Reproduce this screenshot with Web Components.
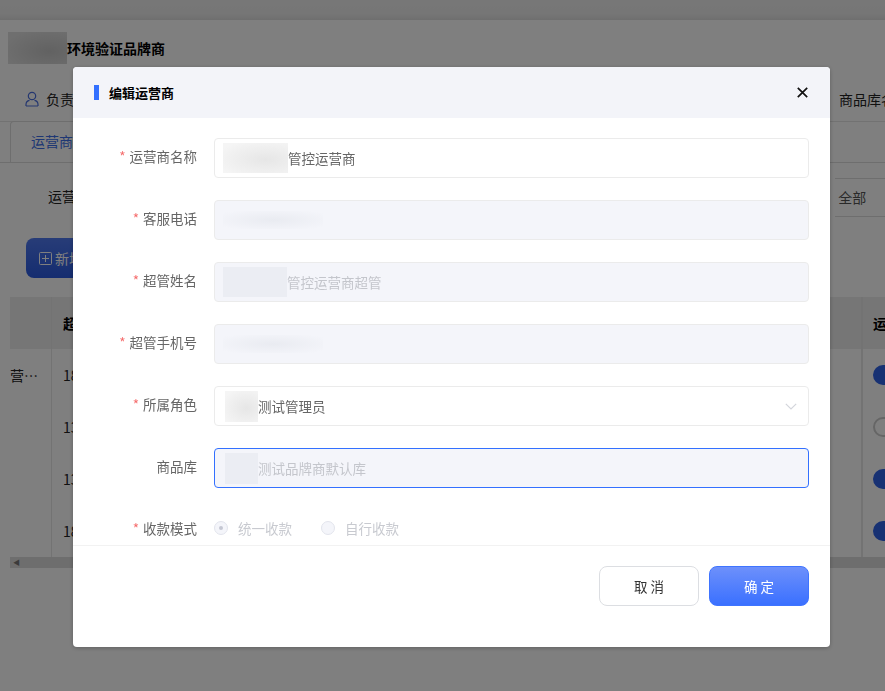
<!DOCTYPE html>
<html lang="zh">
<head>
<meta charset="utf-8">
<title>编辑运营商</title>
<style>
  html, body { margin: 0; height: 100%; background: #fff; overflow: hidden; }
  body { font-family: "Noto Sans CJK SC", "Liberation Sans", sans-serif; font-size: 14px; }
</style>
</head>
<body>
<back-page></back-page>
<modal-mask>
  <edit-dialog heading="编辑运营商">
    <form-row label="运营商名称" required><text-field value="管控运营商" blur="65"></text-field></form-row>
    <form-row label="客服电话" required><text-field disabled blur="100" ghost></text-field></form-row>
    <form-row label="超管姓名" required><text-field disabled value="管控运营商超管" blur="64"></text-field></form-row>
    <form-row label="超管手机号" required><text-field disabled blur="100" ghost></text-field></form-row>
    <form-row label="所属角色" required><text-field value="测试管理员" blur="33" lead="10" arrow></text-field></form-row>
    <form-row label="商品库"><text-field disabled focused value="测试品牌商默认库" blur="33" lead="10"></text-field></form-row>
    <form-row label="收款模式" required>
      <radio-group>
        <radio-item checked>统一收款</radio-item>
        <radio-item>自行收款</radio-item>
      </radio-group>
    </form-row>
    <dialog-button slot="footer">取 消</dialog-button>
    <dialog-button slot="footer" primary>确 定</dialog-button>
  </edit-dialog>
</modal-mask>

<script>
// page behind the mask
const pageTpl = document.createElement('template');
pageTpl.innerHTML = `
<style>
  :host { display: block; height: 691px; overflow: hidden; color: #222; }
  .top { height: 20px; background: linear-gradient(#efefef, #ececec 70%, #dedede); }
  .title { display: flex; align-items: center; height: 32px; margin: 12px 0 0 8px; font-weight: 700; font-size: 14px; color: #000; }
  .title i { width: 59px; height: 32px; background: radial-gradient(ellipse at 70% 60%, #c4c4c4, #dedede 80%); }
  .info { display: flex; justify-content: space-between; align-items: center; height: 40px; margin-top: 15px; padding-left: 25px; }
  .info span { display: flex; align-items: center; gap: 7px; }
  .info .right { width: 46px; white-space: nowrap; }
  .tabs { display: flex; height: 41px; border-bottom: 1px solid #dcdcdc; margin-top: 2px; box-shadow: inset 0 1px 0 #e4e4e4; }
  .tab { width: 100px; margin-left: 10px; box-sizing: border-box; border: 1px solid #dcdcdc; border-bottom: 0; border-radius: 4px 4px 0 0; padding: 9px 20px; color: #3d6fe8; white-space: nowrap; }
  .filter { display: flex; justify-content: space-between; height: 39px; padding-left: 48px; margin-top: 15px; line-height: 36px; }
  .filter .sel { width: 50px; border-top: 1px solid #dcdcdc; border-bottom: 1px solid #dcdcdc; color: #555; white-space: nowrap; margin-top: 0; }
  .filter { margin-top: 15px; }
  .add { width: 120px; height: 40px; margin: 21px 0 0 26px; box-sizing: border-box; border-radius: 8px; background: linear-gradient(#4f79f0, #2a5ae0); color: #fff; display: flex; align-items: center; gap: 3px; padding-left: 13px; }
  .table { display: grid; grid-template-columns: 42px 1fr 23px; margin: 19px 0 0 10px; }
  .cell { height: 52px; display: flex; align-items: center; box-sizing: border-box; border-right: 1px solid #e6e6e6; border-bottom: 0; }
  .head { background: #ececec; font-weight: 700; color: #000; }
  .c2 { padding-left: 11px; }
  .c3 { border-right: 0; border-left: 1px solid #e6e6e6; padding-left: 10px; }
  .on, .off { width: 40px; height: 20px; flex: none; border-radius: 10px; background: #2f62e6; }
  .off { box-sizing: border-box; background: #fff; border: 2px solid #ccc; }
  .sb { height: 11px; background: #dcdcdc; margin: 0 0 0 10px; color: #777; font-size: 7px; line-height: 11px; padding-left: 3px; }
  .num { color: #222; }
</style>
<div class="top"></div>
<div class="title"><i></i>环境验证品牌商</div>
<div class="info">
  <span><svg width="14" height="16" viewBox="0 0 14 16" fill="none" stroke="#4a6fe0" stroke-width="1.2"><circle cx="7" cy="5" r="3.7"/><path d="M1 15v-1.5C1 11 3 9.6 4.5 9.3M13 15v-1.5C13 11 11 9.6 9.5 9.3M1 15h12"/></svg>负责人</span>
  <span class="right">商品库名称</span>
</div>
<div class="tabs"><div class="tab">运营商列表</div></div>
<div class="filter"><span>运营商</span><span class="sel">&nbsp;全部</span></div>
<div class="add"><svg width="13" height="13" viewBox="0 0 13 13" fill="none" stroke="#fff"><rect x=".5" y=".5" width="12" height="12" rx="1"/><path d="M6.5 3v7M3 6.5h7"/></svg>新增</div>
<div class="table">
  <div class="cell head"></div><div class="cell head c2">超管手机号</div><div class="cell head c3">运</div>
  <div class="cell">营…</div><div class="cell c2 num">18</div><div class="cell c3"><span class="on"></span></div>
  <div class="cell"></div><div class="cell c2 num">13</div><div class="cell c3"><span class="off"></span></div>
  <div class="cell"></div><div class="cell c2 num">13</div><div class="cell c3"><span class="on"></span></div>
  <div class="cell"></div><div class="cell c2 num">18</div><div class="cell c3"><span class="on"></span></div>
</div>
<div class="sb">◀</div>`;
class BackPage extends HTMLElement {
  constructor() {
    super();
    this.attachShadow({ mode: 'open' }).appendChild(pageTpl.content.cloneNode(true));
  }
}
customElements.define('back-page', BackPage);

class ModalMask extends HTMLElement {
  constructor() {
    super();
    this.attachShadow({ mode: 'open' }).innerHTML = `
      <style>
        :host { position: fixed; inset: 0; display: flex; box-sizing: border-box; padding: 67px 55px 0 73px; background: rgba(0, 0, 0, 0.5); }
      </style>
      <slot></slot>`;
  }
}
customElements.define('modal-mask', ModalMask);

const dialogTpl = document.createElement('template');
dialogTpl.innerHTML = `
<style>
  :host { display: block; width: 757px; height: 580px; background: #fff; border-radius: 4px; overflow: hidden; box-shadow: 0 1px 4px rgba(0, 0, 0, 0.25); }
  header { display: flex; align-items: center; height: 51px; background: #f3f4f9; padding: 0 22px 0 21px; font-weight: 700; font-size: 13px; color: #000; }
  header i { width: 5px; height: 15px; background: #3370ff; margin-right: 10px; }
  header span { flex: 1; }
  .body { display: flex; flex-direction: column; gap: 22px; height: 428px; box-sizing: border-box; padding: 20px 21px 0 0; border-bottom: 1px solid #f2f2f2; }
  footer { display: flex; justify-content: flex-end; gap: 10px; padding: 20px 21px 0 0; }
</style>
<header><i></i><span class="h"></span>
  <svg width="11" height="11" viewBox="0 0 11 11" fill="none" stroke="#111" stroke-width="1.7"><path d="M.8.8l9.4 9.4M10.2.8L.8 10.2"/></svg>
</header>
<div class="body"><slot></slot></div>
<footer><slot name="footer"></slot></footer>`;
class EditDialog extends HTMLElement {
  constructor() {
    super();
    this.attachShadow({ mode: 'open' }).appendChild(dialogTpl.content.cloneNode(true));
  }
  connectedCallback() {
    this.shadowRoot.querySelector('.h').textContent = this.getAttribute('heading');
  }
}
customElements.define('edit-dialog', EditDialog);

class FormRow extends HTMLElement {
  constructor() {
    super();
    this.attachShadow({ mode: 'open' }).innerHTML = `
      <style>
        :host { display: flex; height: 40px; }
        label { flex: none; width: 124px; margin-right: 17px; text-align: right; font-size: 13.5px; line-height: 37px; color: #666; white-space: nowrap; }
        b { color: #f56c6c; font-weight: 400; margin-right: 4px; }
        div { flex: 1; min-width: 0; }
      </style>
      <label></label><div><slot></slot></div>`;
  }
  connectedCallback() {
    const star = this.hasAttribute('required') ? '<b>*</b>' : '';
    this.shadowRoot.querySelector('label').innerHTML = star + this.getAttribute('label');
  }
}
customElements.define('form-row', FormRow);

class TextField extends HTMLElement {
  constructor() {
    super();
    this.attachShadow({ mode: 'open' }).innerHTML = `
      <style>
        :host { display: flex; align-items: center; height: 40px; box-sizing: border-box; padding-left: var(--lead, 8px); border: 1px solid #ebebeb; border-radius: 4px; background: #fff; color: #666; font-size: 13.5px; overflow: hidden; }
        :host([disabled]) { background: #f4f5fa; color: #c4c6cc; }
        :host([focused]) { border-color: #3370ff; }
        .mask { flex: none; height: 30px; background: radial-gradient(ellipse at 65% 55%, #e6e6e6, #f5f5f5 85%); }
        :host([lead]) .mask { height: 31px; }
        :host([disabled]) .mask { background: #ebedf3; }
        :host([ghost]) .mask { height: 18px; background: radial-gradient(ellipse at center, #e9ebf1, #f4f5fa 90%); }
        span { flex: 1; white-space: nowrap; }
        svg { margin-right: 11px; flex: none; }
      </style>
      <div class="mask"></div><span></span>`;
  }
  connectedCallback() {
    this.shadowRoot.querySelector('.mask').style.width = this.getAttribute('blur') + 'px';
    this.shadowRoot.querySelector('span').textContent = this.getAttribute('value') || '';
    if (this.hasAttribute('lead')) this.style.setProperty('--lead', this.getAttribute('lead') + 'px');
    if (this.hasAttribute('arrow')) {
      this.shadowRoot.querySelector('span').insertAdjacentHTML('afterend',
        '<svg width="12" height="7" viewBox="0 0 12 7" fill="none" stroke="#d4d6dc" stroke-width="1.2"><path d="M.8.8L6 6l5.2-5.2"/></svg>');
    }
  }
}
customElements.define('text-field', TextField);

class RadioGroup extends HTMLElement {
  constructor() {
    super();
    this.attachShadow({ mode: 'open' }).innerHTML = `
      <style>:host { display: flex; align-items: center; gap: 29px; height: 36px; }</style>
      <slot></slot>`;
  }
}
customElements.define('radio-group', RadioGroup);

class RadioItem extends HTMLElement {
  constructor() {
    super();
    this.attachShadow({ mode: 'open' }).innerHTML = `
      <style>
        :host { display: flex; align-items: center; gap: 10px; color: #c8cad0; font-size: 13.5px; }
        i { box-sizing: border-box; width: 14px; height: 14px; border: 1px solid #e2e4ec; border-radius: 50%; background: #f4f5fa; display: flex; align-items: center; justify-content: center; }
        :host([checked]) i::after { content: ""; width: 4px; height: 4px; border-radius: 50%; background: #c4c7d2; }
      </style>
      <i></i><slot></slot>`;
  }
}
customElements.define('radio-item', RadioItem);

class DialogButton extends HTMLElement {
  constructor() {
    super();
    this.attachShadow({ mode: 'open' }).innerHTML = `
      <style>
        :host { display: flex; align-items: center; justify-content: center; width: 100px; height: 40px; box-sizing: border-box; border: 1px solid #dcdee2; border-radius: 8px; background: #fff; color: #333; font-size: 13.5px; }
        :host([primary]) { border-color: #3f74ff; background: linear-gradient(#6d90fb, #3a70ff); color: #fff; }
      </style>
      <slot></slot>`;
  }
}
customElements.define('dialog-button', DialogButton);
</script>
</body>
</html>
